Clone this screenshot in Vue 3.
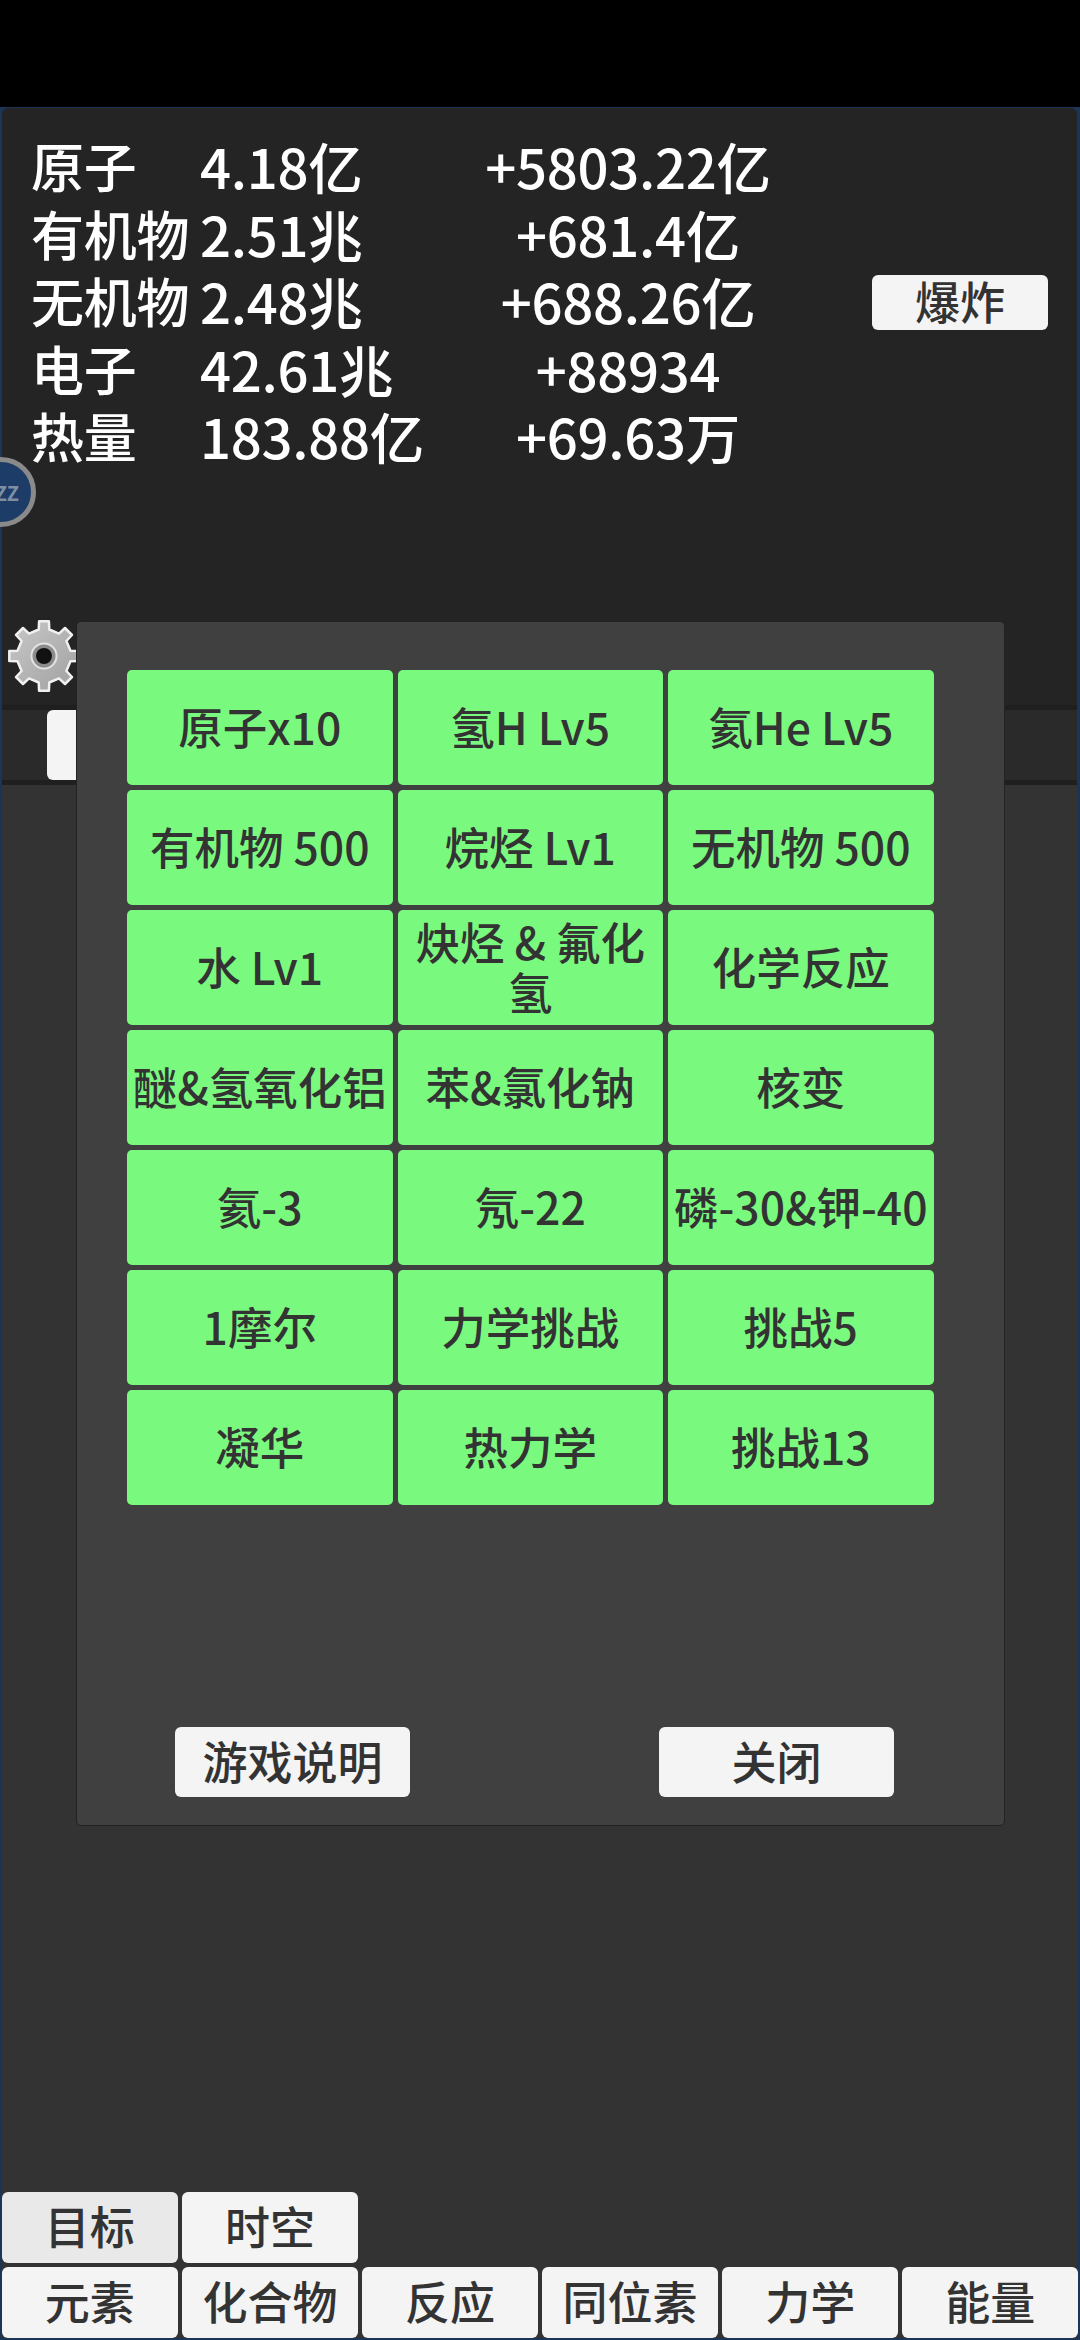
<script setup>
const stats = [
  { name: '原子', value: '4.18亿', rate: '+5803.22亿' },
  { name: '有机物', value: '2.51兆', rate: '+681.4亿' },
  { name: '无机物', value: '2.48兆', rate: '+688.26亿' },
  { name: '电子', value: '42.61兆', rate: '+88934' },
  { name: '热量', value: '183.88亿', rate: '+69.63万' }
]
const goals = [
  '原子x10', '氢H Lv5', '氦He Lv5',
  '有机物 500', '烷烃 Lv1', '无机物 500',
  '水 Lv1', '炔烃 & 氟化氢', '化学反应',
  '醚&氢氧化铝', '苯&氯化钠', '核变',
  '氦-3', '氖-22', '磷-30&钾-40',
  '1摩尔', '力学挑战', '挑战5',
  '凝华', '热力学', '挑战13'
]
const upperTabs = [{ label: '目标', active: true }, { label: '时空', active: false }]
const lowerTabs = ['元素', '化合物', '反应', '同位素', '力学', '能量']

const gearPath = (() => {
  const teeth = 8
  const outer = 35
  const root = 27
  const cx = 38
  const cy = 38
  const pts = []
  for (let i = 0; i < teeth; i++) {
    const a = (i * 2 * Math.PI) / teeth - Math.PI / 2
    const s = Math.PI / teeth
    const at = (r, d) => `${(cx + r * Math.cos(a + d)).toFixed(1)} ${(cy + r * Math.sin(a + d)).toFixed(1)}`
    pts.push(at(root, -s * 0.5), at(outer, -s * 0.36), at(outer, s * 0.36), at(root, s * 0.5))
  }
  return `M${pts.join('L')}Z`
})()
</script>

<template>
  <div class="page">
    <div class="status"></div>
    <div class="screen">
      <section class="top">
        <div class="stats">
          <template v-for="s in stats" :key="s.name">
            <span class="name">{{ s.name }}</span>
            <span>{{ s.value }}</span>
            <span class="rate">{{ s.rate }}</span>
          </template>
        </div>
        <button class="btn explode">爆炸</button>
      </section>
      <div class="strip">
        <button class="btn stripbtn"></button>
      </div>
      <section class="main">
        <div class="tabrow">
          <button
            v-for="t in upperTabs"
            :key="t.label"
            class="btn tab"
            :class="{ active: t.active }"
          >{{ t.label }}</button>
        </div>
        <div class="tabrow">
          <button v-for="t in lowerTabs" :key="t" class="btn tab">{{ t }}</button>
        </div>
      </section>
    </div>

    <div class="sleep"><span>ZZZ</span></div>

    <svg class="gear" width="76" height="76" viewBox="0 0 76 76">
      <defs>
        <linearGradient id="gearFill" x1="0" y1="0" x2="1" y2="1">
          <stop offset="0" stop-color="#c8c8c8" />
          <stop offset="1" stop-color="#a0a0a0" />
        </linearGradient>
      </defs>
      <path :d="gearPath" fill="url(#gearFill)" stroke="#f0f0f0" stroke-width="2.5" stroke-linejoin="round" />
      <circle cx="38" cy="38" r="12.5" fill="#8c8c8c" stroke="#e4e4e4" stroke-width="2" />
      <circle cx="38" cy="38" r="8" fill="#111" />
    </svg>

    <div class="modal">
      <div class="goals">
        <button v-for="g in goals" :key="g" class="goal">{{ g }}</button>
      </div>
      <div class="modal-foot">
        <button class="btn footbtn">游戏说明</button>
        <button class="btn footbtn">关闭</button>
      </div>
    </div>
  </div>
</template>

<style>
html, body { margin: 0; background: #000; }
</style>

<style scoped>
.page {
  position: relative;
  width: 1080px;
  height: 2340px;
  display: flex;
  flex-direction: column;
  overflow: hidden;
  background: #000;
  font-family: "Noto Sans CJK SC", "Noto Sans", sans-serif;
}
.status { height: 107px; flex: none; }
.screen {
  flex: 1;
  display: flex;
  flex-direction: column;
  min-height: 0;
  padding: 1px 3px 2px 2px;
  background: #1c3557;
}
.top {
  height: 597px;
  flex: none;
  box-sizing: border-box;
  display: flex;
  align-items: flex-start;
  padding: 24px 29px 0 29px;
  background: #242424;
  border-radius: 6px 6px 0 0;
  color: #fff;
}
.stats {
  display: grid;
  grid-template-columns: 169px 200px 456px;
  grid-auto-rows: 67.5px;
  align-items: center;
  font-size: 54.5px;
  font-weight: 500;
  line-height: 67.5px;
  letter-spacing: -0.3px;
  white-space: nowrap;
}
.name { font-size: 53px; }
.rate { text-align: center; }
.btn {
  border: 0;
  padding: 0 0 4px;
  margin: 0;
  border-radius: 6px;
  background: #f4f4f4;
  color: #333;
  font-family: inherit;
  font-size: 45px;
  font-weight: 500;
  line-height: 1;
  white-space: nowrap;
}
.explode {
  width: 176px;
  height: 55px;
  margin-top: 143px;
  margin-left: auto;
}
.strip {
  height: 70px;
  flex: none;
  padding-left: 45px;
  background: #2a2a2a;
  border-top: 5px solid #1f1f1f;
  border-bottom: 5px solid #1f1f1f;
}
.stripbtn { display: block; width: 200px; height: 70px; }
.main {
  flex: 1;
  min-height: 0;
  display: flex;
  flex-direction: column;
  justify-content: flex-end;
  gap: 4px;
  background: #333;
}
.tabrow { display: flex; gap: 4.5px; }
.tab { width: 175.6px; height: 71px; flex: none; }
.tab.active { background: #e9e9e9; }
.sleep {
  position: absolute;
  left: -34px;
  top: 457px;
  width: 70px;
  height: 70px;
  box-sizing: border-box;
  border: 5px solid #8a8a8a;
  border-radius: 50%;
  background: #1d3d68;
  display: flex;
  align-items: center;
  justify-content: center;
  color: #7f8ea3;
  font-size: 20px;
  font-weight: 700;
}
.gear { position: absolute; left: 6px; top: 618px; }
.modal {
  position: absolute;
  left: 76px;
  top: 621px;
  width: 929px;
  height: 1205px;
  box-sizing: border-box;
  display: flex;
  flex-direction: column;
  padding: 48px 71px 28px 50px;
  background: #404040;
  border: 1px solid #222;
  border-radius: 5px;
}
.goals {
  display: grid;
  grid-template-columns: repeat(3, 265.5px);
  grid-auto-rows: 115px;
  gap: 5px;
}
.goal {
  border: 0;
  padding: 0 0 4px;
  border-radius: 5px;
  background: #7af97f;
  color: #333;
  font-family: inherit;
  font-size: 44.5px;
  font-weight: 500;
  line-height: 50px;
}
.modal-foot {
  margin-top: auto;
  display: flex;
  justify-content: space-between;
  padding: 0 39px 0 48px;
}
.footbtn { width: 235px; height: 70px; }
</style>
